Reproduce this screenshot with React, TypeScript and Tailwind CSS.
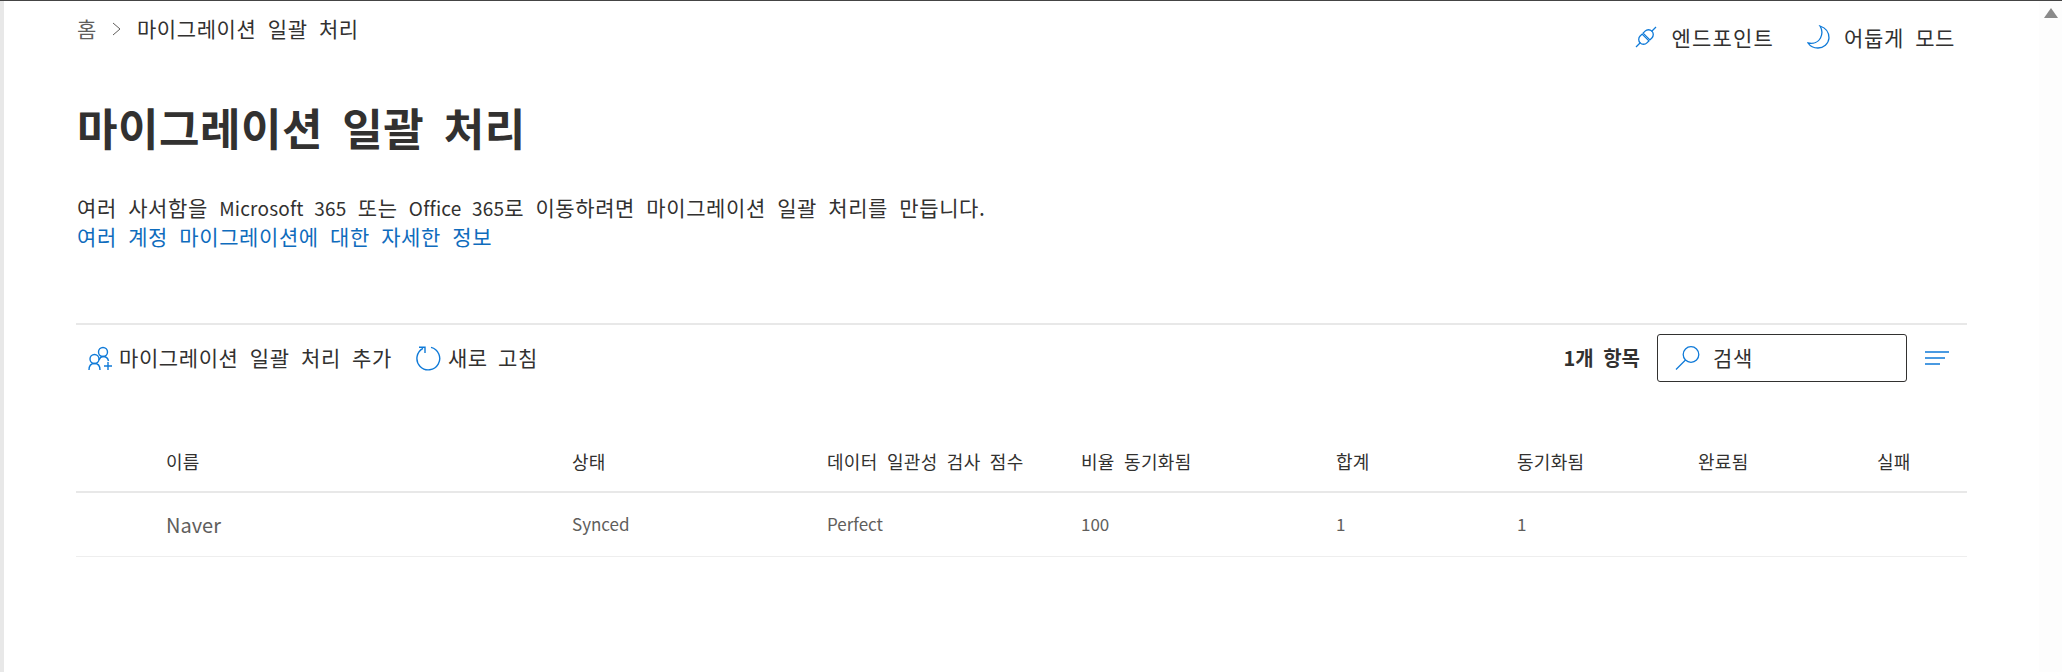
const font = "font-['Noto_Sans_CJK_KR','Open_Sans',sans-serif]";
const spaced = "text-[21px] tracking-[0.6px] [word-spacing:6px]";

function PlugIcon() {
  return (
    <svg width="22" height="22" viewBox="0 0 22 22" fill="none" stroke="#0f7ad8" strokeWidth="1.3">
      <path d="M1 21 L5.5 16.5" />
      <path d="M16.5 5.5 L21 1" />
      <g transform="rotate(-45 11 11)">
        <path d="M10.3 6.2 H7.5 A4.8 4.8 0 0 0 7.5 15.8 H10.3 Z" />
        <path d="M11.7 6.2 H14.5 A4.8 4.8 0 0 1 14.5 15.8 H11.7 Z" />
      </g>
    </svg>
  );
}

function MoonIcon() {
  return (
    <svg width="23" height="24" viewBox="0 0 23 24" fill="none" stroke="#0f7ad8" strokeWidth="1.3">
      <path d="M13 1 C19 3 22 8 22 13 C21.5 19 16.5 23 11 23 C6.5 23 3 21 1 18 C6.5 19 11.5 17 13.5 13 C15.5 9 15.5 5 13 1 Z" />
    </svg>
  );
}

function PeopleIcon() {
  return (
    <svg width="25" height="24" viewBox="0 0 25 24" fill="none" stroke="#0f7ad8" strokeWidth="1.4">
      <circle cx="15" cy="6" r="4.5" />
      <path d="M11 14 C12 11.5 13 10.5 15 10.5 C18 10.5 20 12.5 20.5 15" />
      <circle cx="6.5" cy="13" r="4.5" />
      <path d="M1 24 C1 20 3 17.5 6.5 17.5 C10 17.5 12 20 12 24" />
      <path d="M16 20 H24 M20 16 V24" />
    </svg>
  );
}

function RefreshIcon() {
  return (
    <svg width="25" height="25" viewBox="0 0 25 25" fill="none" stroke="#0f7ad8" strokeWidth="1.4">
      <path d="M15 1.4 A11.4 11.4 0 1 1 7 2.4" />
      <path d="M3 1.2 H9 V7" />
    </svg>
  );
}

function SearchIcon() {
  return (
    <svg width="25" height="24" viewBox="0 0 25 24" fill="none" stroke="#0f7ad8" strokeWidth="1.3">
      <circle cx="16" cy="8.5" r="7.8" />
      <path d="M10.5 14 L1 23.5" />
    </svg>
  );
}

const columns = [
  { label: "이름", width: "w-[406px]" },
  { label: "상태", width: "w-[255px]" },
  { label: "데이터 일관성 검사 점수", width: "w-[254px]" },
  { label: "비율 동기화됨", width: "w-[255px]" },
  { label: "합계", width: "w-[181px]" },
  { label: "동기화됨", width: "w-[181px]" },
  { label: "완료됨", width: "w-[179px]" },
  { label: "실패", width: "w-[90px]" },
];

const row = ["Synced", "Perfect", "100", "1", "1", "", ""];

export default function App() {
  return (
    <div className={`${font} w-[2062px] h-[672px] bg-white overflow-hidden border-t border-t-[#444444] flex text-[#323130]`}>
      <div className="w-[4px] shrink-0 bg-[#e8e8e8]" />
      <main className="w-[2035px] shrink-0 pl-[72px] pr-[72px] flex flex-col">
        <header className="flex justify-between h-[53px]">
          <nav className={`flex items-start pt-[13px] pl-[1px] ${spaced} leading-[28px]`}>
            <span className="text-[#605e5c]">홈</span>
            <svg className="mx-[15px] mt-[8px]" width="10" height="14" viewBox="0 0 10 14" fill="none" stroke="#605e5c" strokeWidth="1">
              <path d="M1 1 L8 7 L1 13" />
            </svg>
            <span>마이그레이션 일괄 처리</span>
          </nav>
          <div className={`flex items-start pt-[23px] pr-[12px] ${spaced} leading-[26px]`}>
            <div className="flex items-center">
              <PlugIcon />
              <span className="ml-[14px] tracking-[1.2px]">엔드포인트</span>
            </div>
            <div className="flex items-center ml-[33px]">
              <MoonIcon />
              <span className="ml-[14px]">어둡게 모드</span>
            </div>
          </div>
        </header>
        <h1 className="mt-[48px] pl-[1px] text-[44px] leading-[50px] font-bold tracking-[0.5px] [word-spacing:9px]">마이그레이션 일괄 처리</h1>
        <p className={`mt-[41px] pl-[1px] ${spaced} leading-[29px]`}>
          여러 사서함을 <span className="text-[19px] tracking-[0.2px]">Microsoft 365</span> 또는 <span className="text-[19px] tracking-[0.2px]">Office 365</span>로 이동하려면 마이그레이션 일괄 처리를 만듭니다.
        </p>
        <a className={`pl-[1px] ${spaced} leading-[29px] text-[#0f6cbd]`}>여러 계정 마이그레이션에 대한 자세한 정보</a>
        <div className="mt-[72px] border-t-2 border-[#e8e8e8] h-[68px] flex items-center justify-between pl-[12px] pr-[18px]">
          <div className={`flex items-center ${spaced}`}>
            <PeopleIcon />
            <span className="ml-[6px]">마이그레이션 일괄 처리 추가</span>
            <span className="ml-[24px]"><RefreshIcon /></span>
            <span className="ml-[7px] [word-spacing:5px]">새로 고침</span>
          </div>
          <div className="flex items-center">
            <span className="text-[20px] font-bold [word-spacing:5px]">1개 항목</span>
            <div className="ml-[17px] w-[250px] h-[48px] border border-[#323130] rounded-[3px] flex items-center pl-[17px]">
              <SearchIcon />
              <span className="ml-[13px] text-[21px] tracking-[0.6px]">검색</span>
            </div>
            <svg className="ml-[18px]" width="24" height="14" viewBox="0 0 24 14" stroke="#0f7ad8" strokeWidth="1.4">
              <path d="M0 1 H24 M0 7 H20 M0 13 H15" />
            </svg>
          </div>
        </div>
        <section className="mt-[42px]">
          <div className="flex h-[60px] pb-[2px] border-b-2 border-[#e8e8e8] items-center pl-[90px] text-[18px] tracking-[0.3px] [word-spacing:5px]">
            {columns.map((c) => (
              <div key={c.label} className={`${c.width} shrink-0`}>{c.label}</div>
            ))}
          </div>
          <div className="flex h-[64px] border-b border-[#eeeeee] items-center pl-[90px] text-[#605e5c] text-[17px]">
            <div className="w-[406px] shrink-0 text-[20px] mt-[1px]">Naver</div>
            {row.map((v, i) => (
              <div key={i} className={`${columns[i + 1].width} shrink-0 -mt-[2px]`}>{v}</div>
            ))}
          </div>
        </section>
      </main>
      <aside className="w-[23px] shrink-0 bg-[#fdfdfd] flex justify-center pt-[7px]">
        <div className="w-0 h-0 border-x-[7px] border-x-transparent border-b-[10px] border-b-[#8a8a8a]" />
      </aside>
    </div>
  );
}
